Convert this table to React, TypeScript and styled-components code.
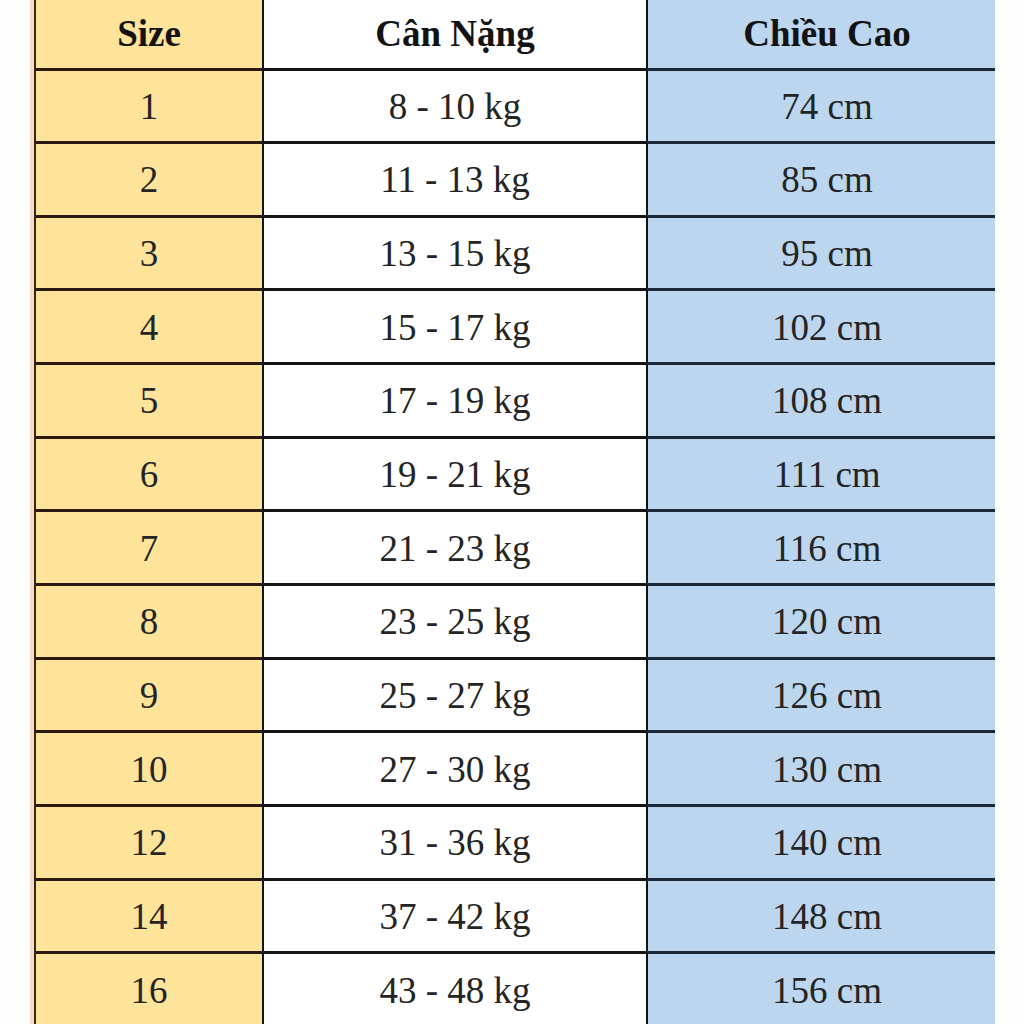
import React from "react";
import styled, { createGlobalStyle } from "styled-components";

const Global = createGlobalStyle`
  html, body { margin: 0; padding: 0; background: #ffffff; }
  body { font-family: "Liberation Serif", "Times New Roman", serif; }
`;

const Page = styled.div`
  width: 1024px;
  height: 1024px;
  overflow: hidden;
  padding-left: 30px;
  box-sizing: border-box;
  background: #fefefe;
`;

const Table = styled.div`
  display: flex;
  flex-direction: column;
  width: 965px;
  border-left: 4px solid #f6dccb;
`;

const Row = styled.div<{ $head?: boolean }>`
  display: grid;
  grid-template-columns: 228px 384px 349px;
  height: ${(p) => (p.$head ? "67.5px" : "73.67px")};
  flex: none;
`;

type Tone = "gold" | "white" | "blue";

const bg: Record<Tone, string> = {
  gold: "#fee49b",
  white: "#ffffff",
  blue: "#bdd6ef",
};

const line: Record<Tone, string> = {
  gold: "#2a1a10",
  white: "#151515",
  blue: "#1b2636",
};

const vline: Record<Tone, string> = {
  gold: "#3a2414",
  white: "#141414",
  blue: "#111111",
};

const Cell = styled.div<{ $tone: Tone; $head?: boolean }>`
  display: flex;
  align-items: center;
  justify-content: center;
  box-sizing: border-box;
  background: ${(p) => bg[p.$tone]};
  border-left: 2px solid ${(p) => vline[p.$tone]};
  border-top: ${(p) => (p.$head ? "none" : `3px solid ${line[p.$tone]}`)};
  font-size: 37px;
  font-weight: ${(p) => (p.$head ? 700 : 400)};
  color: ${(p) => (p.$head ? "#131313" : "#242424")};
  line-height: 1;
  padding-top: ${(p) => (p.$head ? "0" : "1px")};
  white-space: nowrap;
`;

const BlueCell = styled(Cell)`
  padding-left: 11px;
`;

const rows: [string, string, string][] = [
  ["1", "8 - 10 kg", "74 cm"],
  ["2", "11 - 13 kg", "85 cm"],
  ["3", "13 - 15 kg", "95 cm"],
  ["4", "15 - 17 kg", "102 cm"],
  ["5", "17 - 19 kg", "108 cm"],
  ["6", "19 - 21 kg", "111 cm"],
  ["7", "21 - 23 kg", "116 cm"],
  ["8", "23 - 25 kg", "120 cm"],
  ["9", "25 - 27 kg", "126 cm"],
  ["10", "27 - 30 kg", "130 cm"],
  ["12", "31 - 36 kg", "140 cm"],
  ["14", "37 - 42 kg", "148 cm"],
  ["16", "43 - 48 kg", "156 cm"],
];

export default function App() {
  return (
    <>
      <Global />
      <Page>
        <Table>
          <Row $head>
            <Cell $tone="gold" $head>Size</Cell>
            <Cell $tone="white" $head>Cân Nặng</Cell>
            <BlueCell $tone="blue" $head>Chiều Cao</BlueCell>
          </Row>
          {rows.map(([s, w, h]) => (
            <Row key={s}>
              <Cell $tone="gold">{s}</Cell>
              <Cell $tone="white">{w}</Cell>
              <BlueCell $tone="blue">{h}</BlueCell>
            </Row>
          ))}
        </Table>
      </Page>
    </>
  );
}
